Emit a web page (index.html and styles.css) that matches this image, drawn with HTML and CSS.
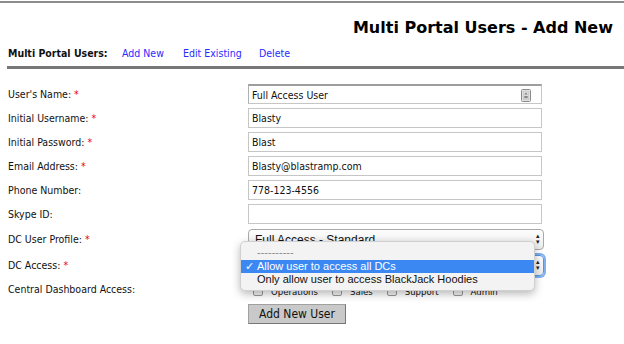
FILE: index.html
```html
<!DOCTYPE html>
<html>
<head>
<meta charset="utf-8">
<link rel="stylesheet" href="styles.css">
</head>
<body>
<div class="topline"></div>
<h1 class="title">Multi Portal Users - Add New</h1>
<nav class="nav">
  <span class="nav-label">Multi Portal Users:</span>
  <a class="nav-link" href="#">Add New</a>
  <a class="nav-link" href="#">Edit Existing</a>
  <a class="nav-link" href="#">Delete</a>
</nav>
<div class="bar"></div>
<form class="form">
  <label class="lbl">User's Name: <span class="req">*</span></label>
  <div class="field first">Full Access User
    <svg class="contact" width="10" height="13" viewBox="0 0 10 13"><rect x="0.5" y="0.5" width="9" height="12" rx="1" fill="#f4f4f4" stroke="#8a8a8a"/><rect x="2" y="2" width="6" height="9" fill="#dcdcdc" stroke="#b0b0b0" stroke-width="0.6"/><path d="M5 3.5 L3.5 5.5 H6.5 Z" fill="#777"/><rect x="3.3" y="7" width="3.4" height="2.2" fill="#888"/></svg>
  </div>
  <label class="lbl">Initial Username: <span class="req">*</span></label>
  <div class="field">Blasty</div>
  <label class="lbl">Initial Password: <span class="req">*</span></label>
  <div class="field">Blast</div>
  <label class="lbl">Email Address: <span class="req">*</span></label>
  <div class="field">Blasty@blastramp.com</div>
  <label class="lbl">Phone Number:</label>
  <div class="field">778-123-4556</div>
  <label class="lbl">Skype ID:</label>
  <div class="field"></div>
  <label class="lbl">DC User Profile: <span class="req">*</span></label>
  <div class="select">Full Access - Standard<span class="arrows">▴<br>▾</span></div>
  <label class="lbl">DC Access: <span class="req">*</span></label>
  <div class="select focused">Allow user to access all DCs<span class="arrows">▴<br>▾</span>
    <div class="popup">
      <div class="opt dim">----------</div>
      <div class="opt sel"><span class="check">✓</span>Allow user to access all DCs</div>
      <div class="opt">Only allow user to access BlackJack Hoodies</div>
    </div>
  </div>
  <label class="lbl">Central Dashboard Access:</label>
  <div class="checks">
    <span class="cb"></span><span class="ct">Operations</span>
    <span class="cb"></span><span class="ct">Sales</span>
    <span class="cb"></span><span class="ct">Support</span>
    <span class="cb"></span><span class="ct">Admin</span>
  </div>
  <div class="spacer"></div>
  <div class="btn-cell"><button type="button" class="btn">Add New User</button></div>
</form>
</body>
</html>
```

FILE: styles.css
```css
html, body {
  margin: 0;
  padding: 0;
  background: #fff;
}
body {
  width: 624px;
  height: 344px;
  overflow: hidden;
  font-family: "DejaVu Sans Condensed", "DejaVu Sans", sans-serif;
  font-size: 10.5px;
  color: #111;
  padding-top: 1px;
  box-sizing: border-box;
}
.topline {
  height: 2px;
  background: #8c8c8c;
}
.title {
  margin: 14px 11px 0 0;
  text-align: right;
  font-family: "DejaVu Sans", sans-serif;
  font-size: 16px;
  line-height: 22px;
  font-weight: bold;
  color: #000;
}
.nav {
  display: flex;
  align-items: center;
  height: 14px;
  margin-top: 7px;
  padding-left: 8px;
}
.nav-label {
  font-weight: bold;
  width: 114px;
}
.nav-link {
  color: #2a2aff;
  text-decoration: none;
}
.nav-link:nth-of-type(1) { width: 61px; }
.nav-link:nth-of-type(2) { width: 76px; }
.bar {
  height: 3px;
  background: #777;
  margin: 6px 0 0 7px;
}
.form {
  display: grid;
  grid-template-columns: 240px 296px;
  grid-template-rows: repeat(6, 20px) 22px 22px 17px 24px;
  row-gap: 4px;
  padding-left: 8px;
  margin-top: 15px;
}
.lbl {
  display: flex;
  align-items: center;
  white-space: nowrap;
}
.req {
  color: #e00;
  margin-left: 3px;
}
.field {
  position: relative;
  box-sizing: border-box;
  width: 294px;
  height: 20px;
  border: 1px solid #c6c6c6;
  padding: 0 3px;
  display: flex;
  align-items: center;
}
.field.first {
  border-top: 2px solid #9e9e9e;
  border-left-color: #b0b0b0;
}
.contact {
  position: absolute;
  right: 10px;
  top: 3px;
}
.select {
  position: relative;
  align-self: end;
  box-sizing: border-box;
  height: 21px;
  border: 1px solid #a9a9a9;
  border-radius: 4px;
  background: linear-gradient(#fdfdfd, #ececec);
  padding: 0 6px;
  display: flex;
  align-items: center;
  font-family: "Liberation Sans", sans-serif;
  font-size: 12px;
  width: 296px;
}
.select.focused {
  box-shadow: 0 0 0 2px #7fb0ef;
  border-color: #5a94df;
}
.arrows {
  position: absolute;
  right: 3px;
  top: 3px;
  font-size: 7px;
  line-height: 6px;
  color: #222;
}
.popup {
  position: absolute;
  left: -9px;
  top: -15px;
  width: 295px;
  box-sizing: border-box;
  padding: 4px 0 3px;
  background: #f3f3f3;
  border: 1px solid #d0d0d0;
  border-radius: 5px;
  box-shadow: 0 3px 8px rgba(0,0,0,0.28);
  font-family: "Liberation Sans", sans-serif;
  font-size: 11px;
  color: #111;
  z-index: 5;
}
.opt {
  height: 13.5px;
  line-height: 13.5px;
  padding-left: 16px;
  position: relative;
  white-space: nowrap;
}
.opt.dim {
  color: #8a8a8a;
}
.opt.sel {
  background: #3c88f2;
  color: #fff;
}
.check {
  position: absolute;
  left: 4px;
  top: 0;
  font-family: "DejaVu Sans", sans-serif;
}
.checks {
  display: flex;
  align-items: flex-end;
  padding-left: 5px;
  font-size: 9.5px;
}
.cb {
  width: 10px;
  height: 10px;
  border: 1px solid #999;
  border-radius: 2px;
  background: #f4f4f4;
  box-sizing: border-box;
  margin-right: 8px;
  margin-bottom: 1px;
}
.ct {
  margin-right: 14px;
}
.btn-cell {
  padding-top: 3px;
}
.btn {
  width: 98px;
  height: 20px;
  margin: 0;
  padding: 0;
  background: #c9c9c9;
  border: 1px solid #a0a0a0;
  border-right-color: #777;
  border-bottom-color: #777;
  font-family: "DejaVu Sans Condensed", "DejaVu Sans", sans-serif;
  font-size: 12px;
  color: #111;
}
```
